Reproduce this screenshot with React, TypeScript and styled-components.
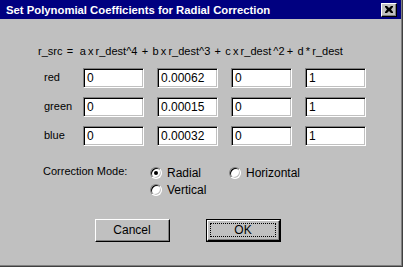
import React from "react";
import styled, { createGlobalStyle } from "styled-components";

const GlobalStyle = createGlobalStyle`
  html, body {
    margin: 0;
    padding: 0;
    background: #c0c0c0;
  }
  body {
    font-family: "Liberation Sans", Arial, sans-serif;
    font-size: 11px;
    color: #000;
  }
`;

const ROWS = [
  { label: "red", values: ["0", "0.00062", "0", "1"] },
  { label: "green", values: ["0", "0.00015", "0", "1"] },
  { label: "blue", values: ["0", "0.00032", "0", "1"] },
];

const Window = styled.div`
  width: 403px;
  height: 267px;
  box-sizing: border-box;
  background: #c0c0c0;
  border-right: 1px solid #404040;
  border-bottom: 1px solid #404040;
  box-shadow: inset -1px -1px 0 #808080;
  display: flex;
  flex-direction: column;
`;

const TitleBar = styled.div`
  height: 19px;
  background: #000080;
  display: flex;
  align-items: center;
  justify-content: space-between;
  padding: 0 3px 0 6px;
  margin-right: 1px;
`;

const Title = styled.span`
  color: #fff;
  font-weight: bold;
  font-size: 11.3px;
`;

const CloseButton = styled.div`
  width: 16px;
  height: 14px;
  box-sizing: border-box;
  background: #c0c0c0;
  border-top: 1px solid #fff;
  border-left: 1px solid #fff;
  border-right: 1px solid #000;
  border-bottom: 1px solid #000;
  box-shadow: inset -1px -1px 0 #808080;
  display: flex;
  align-items: center;
  justify-content: center;
  margin-right: 1px;
`;

const Body = styled.div`
  flex: 1;
  display: flex;
  flex-direction: column;
  padding: 25px 0 0 38px;
`;

const Formula = styled.div`
  height: 14px;
  line-height: 14px;
  white-space: pre;
  word-spacing: -0.9px;
`;

const Grid = styled.div`
  display: grid;
  grid-template-columns: 26px repeat(4, 61px);
  column-gap: 13px;
  row-gap: 9px;
  margin: 10px 0 0 6px;
  align-items: center;
`;

const Label = styled.span`
  margin-top: -3px;
  white-space: nowrap;
`;

const Field = styled.div`
  height: 20px;
  box-sizing: border-box;
  background: #fff;
  border-top: 1px solid #808080;
  border-left: 1px solid #808080;
  border-right: 1px solid #fff;
  border-bottom: 1px solid #fff;
  box-shadow: inset 1px 1px 0 #000, inset -1px -1px 0 #c0c0c0;
  padding: 3px 0 0 3px;
  font-size: 12px;
  line-height: 13px;
`;

const ModeRow = styled.div`
  display: flex;
  margin: 19px 0 0 5px;
`;

const ModeLabel = styled.span`
  width: 107px;
  line-height: 13px;
`;

const RadioGrid = styled.div`
  display: grid;
  grid-template-columns: 79px auto;
  row-gap: 4px;
  margin-top: 1px;
`;

const RadioItem = styled.div`
  display: flex;
  align-items: center;
  height: 13px;
  gap: 5px;
  font-size: 12px;
`;

const RadioCircle = styled.span<{ $checked?: boolean }>`
  width: 12px;
  height: 12px;
  box-sizing: border-box;
  border-radius: 50%;
  background: #fff;
  border: 1px solid;
  border-color: #808080 #fff #fff #808080;
  box-shadow: inset 1px 1px 0 #000, inset -1px -1px 0 #c0c0c0;
  display: flex;
  align-items: center;
  justify-content: center;
  &::after {
    content: "";
    width: 4px;
    height: 4px;
    border-radius: 50%;
    background: #000;
    display: ${(p) => (p.$checked ? "block" : "none")};
  }
`;

const ButtonRow = styled.div`
  display: flex;
  gap: 36px;
  margin: 23px 0 0 57px;
`;

const Button = styled.div<{ $default?: boolean }>`
  width: 75px;
  height: 23px;
  box-sizing: border-box;
  background: #c0c0c0;
  border: ${(p) => (p.$default ? "1px solid #000" : "none")};
  display: flex;
  font-size: 12px;
`;

const ButtonFace = styled.div`
  flex: 1;
  box-sizing: border-box;
  border-top: 1px solid #fff;
  border-left: 1px solid #fff;
  border-right: 1px solid #000;
  border-bottom: 1px solid #000;
  box-shadow: inset -1px -1px 0 #808080;
  display: flex;
  padding: 2px 3px 3px 2px;
`;

const Focus = styled.div<{ $show?: boolean }>`
  flex: 1;
  display: flex;
  align-items: center;
  justify-content: center;
  border: 1px dotted ${(p) => (p.$show ? "#000" : "transparent")};
`;

function Radio({ label, checked }: { label: string; checked?: boolean }) {
  return (
    <RadioItem>
      <RadioCircle $checked={checked} />
      <span>{label}</span>
    </RadioItem>
  );
}

export default function App() {
  return (
    <>
      <GlobalStyle />
      <Window>
        <TitleBar>
          <Title>Set Polynomial Coefficients for Radial Correction</Title>
          <CloseButton>
            <svg width="8" height="7" viewBox="0 0 8 7">
              <path d="M0 0h2l2 2 2-2h2v1L6 3.5 8 6v1H6L4 5 2 7H0V6l2-2.5L0 1z" fill="#000" />
            </svg>
          </CloseButton>
        </TitleBar>
        <Body>
          <Formula>
            {"r_src  =   a x r_dest^4  +  b x r_dest^3  +  c x r_dest ^2 +  d * r_dest"}
          </Formula>
          <Grid>
            {ROWS.map((row) => (
              <React.Fragment key={row.label}>
                <Label>{row.label}</Label>
                {row.values.map((v, i) => (
                  <Field key={i}>{v}</Field>
                ))}
              </React.Fragment>
            ))}
          </Grid>
          <ModeRow>
            <ModeLabel>Correction Mode:</ModeLabel>
            <RadioGrid>
              <Radio label="Radial" checked />
              <Radio label="Horizontal" />
              <Radio label="Vertical" />
            </RadioGrid>
          </ModeRow>
          <ButtonRow>
            <Button>
              <ButtonFace>
                <Focus>Cancel</Focus>
              </ButtonFace>
            </Button>
            <Button $default>
              <ButtonFace>
                <Focus $show>OK</Focus>
              </ButtonFace>
            </Button>
          </ButtonRow>
        </Body>
      </Window>
    </>
  );
}
